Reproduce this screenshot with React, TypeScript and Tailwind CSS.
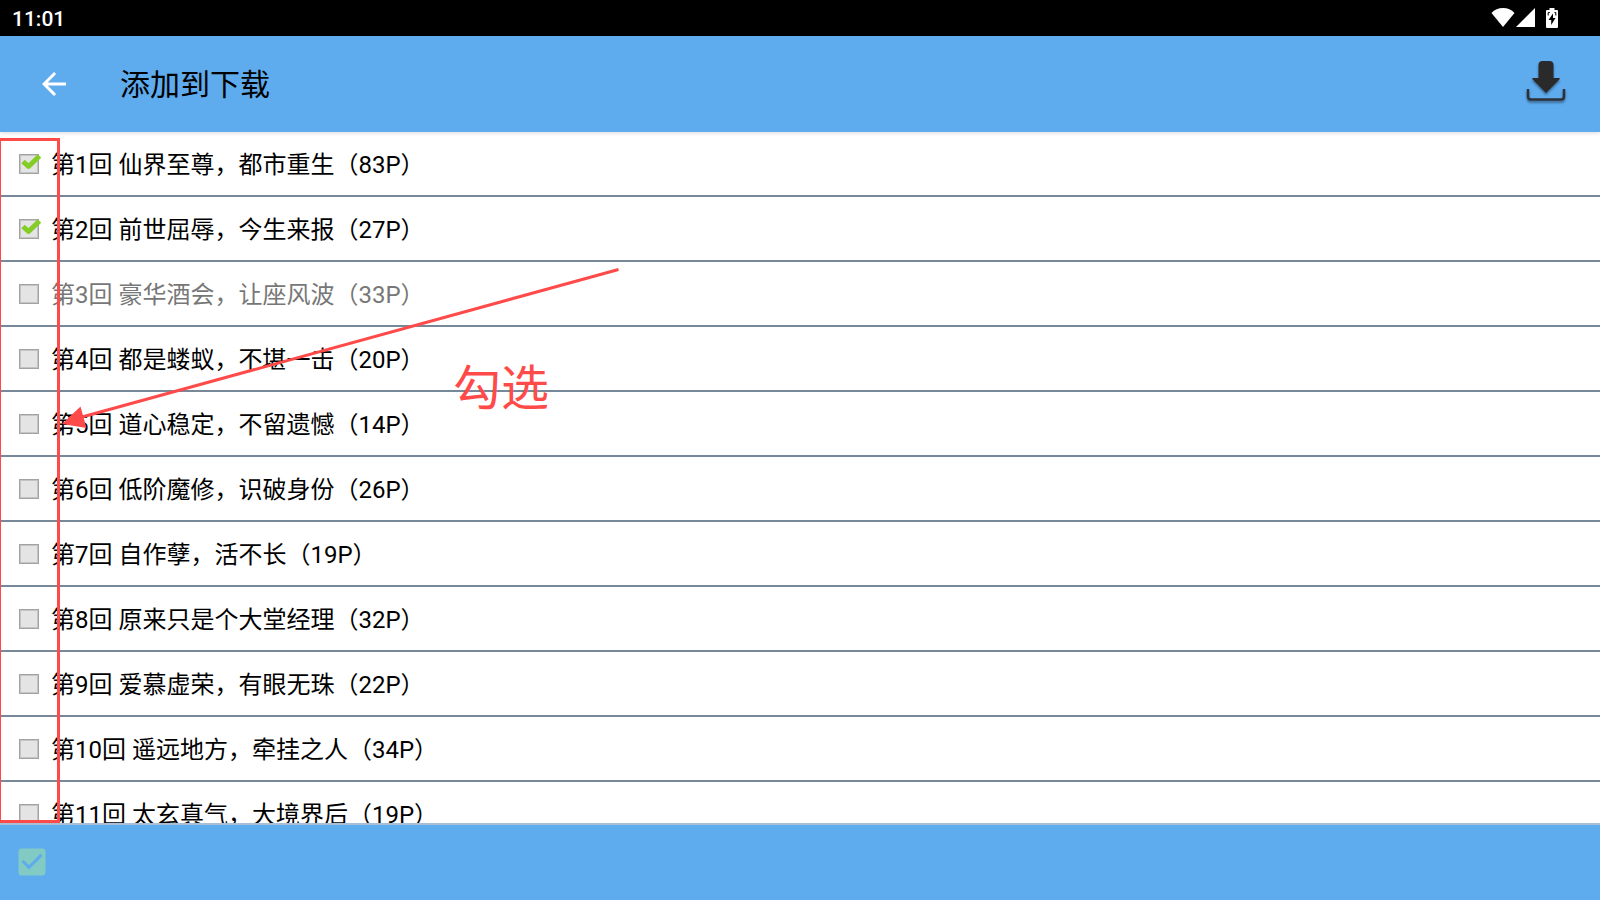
import { useState } from 'react';

type Chapter = {
  id: number;
  title: string;
  pages: number;
  downloaded?: boolean;
};

const chapters: Chapter[] = [
  { id: 1, title: '仙界至尊，都市重生', pages: 83 },
  { id: 2, title: '前世屈辱，今生来报', pages: 27 },
  { id: 3, title: '豪华酒会，让座风波', pages: 33, downloaded: true },
  { id: 4, title: '都是蝼蚁，不堪一击', pages: 20 },
  { id: 5, title: '道心稳定，不留遗憾', pages: 14 },
  { id: 6, title: '低阶魔修，识破身份', pages: 26 },
  { id: 7, title: '自作孽，活不长', pages: 19 },
  { id: 8, title: '原来只是个大堂经理', pages: 32 },
  { id: 9, title: '爱慕虚荣，有眼无珠', pages: 22 },
  { id: 10, title: '遥远地方，牵挂之人', pages: 34 },
  { id: 11, title: '太玄真气，大境界后', pages: 19 },
];

const StatusBar = () => (
  <div className="flex h-9 shrink-0 items-center justify-between bg-black pl-3 pr-[42px] text-white">
    <span className="pt-0.5 text-[21px] font-medium leading-8">11:01</span>
    <div className="flex items-center">
      <svg className="h-5 w-6" viewBox="0 0 24 20" fill="currentColor">
        <path d="M12 19 .5 5Q5 0 12 0t11.500 5z" />
      </svg>
      <svg className="ml-px h-5 w-5" viewBox="0 0 20 20" fill="currentColor">
        <path d="M0 19 19 0v19z" />
      </svg>
      <svg className="ml-[10px] h-5 w-3" viewBox="0 0 12 20">
        <path
          d="M3.500 0h5v2H11q1 0 1 1v16q0 1-1 1H1q-1 0-1-1V3q0-1 1-1h2.500z"
          fill="currentColor"
        />
        <path d="M7 5.500 2.500 12h2.700v5L9.500 10H7z" fill="#000" />
        <path d="M2.200 7.500V4.500h1.600M9.800 7.500V4.500H8.500" fill="none" stroke="#000" />
      </svg>
    </div>
  </div>
);

const Header = () => (
  <header className="z-10 flex h-24 shrink-0 items-center bg-[#5eabee] pl-9 pr-[34px] shadow-[0_1px_4px_rgba(0,0,0,0.15)]">
    <button type="button" aria-label="返回" className="text-white">
      <svg className="h-9 w-9" viewBox="0 0 24 24" fill="currentColor">
        <path d="M20 11H7.830l5.590-5.590L12 4l-8 8 8 8 1.410-1.410L7.830 13H20v-2z" />
      </svg>
    </button>
    <h1 className="ml-12 flex-1 pt-0.5 text-[30px] leading-10">添加到下载</h1>
    <button type="button" aria-label="下载" className="pb-0.5">
      <svg className="h-12 w-11 drop-shadow-[0_2px_1px_rgba(0,0,0,0.4)]" viewBox="0 0 44 48">
        <path
          d="M16.500 19V6q0-4 4-4h7q4 0 4 4v13h5.500q1.500 0 .5 1.200L24 34 10.500 20.200q-1-1.200.5-1.200z"
          fill="#2a2a2a"
        />
        <path
          d="M6 30v7.500q0 3 3 3h30q3 0 3-3V30"
          fill="none"
          stroke="#2c3238"
          strokeWidth="2.500"
        />
      </svg>
    </button>
  </header>
);

type RowProps = {
  chapter: Chapter;
  checked: boolean;
  onToggle: () => void;
};

const ChapterRow = ({ chapter, checked, onToggle }: RowProps) => (
  <li className="h-[65px] shrink-0 border-b-2 border-[#778899]">
    <label className="flex h-full items-center pl-[19px]">
      <span className="relative flex">
        <input
          type="checkbox"
          checked={checked}
          disabled={chapter.downloaded}
          onChange={onToggle}
          className="h-5 w-5 appearance-none border border-[#a3a3a3] bg-[#e4e4e4] outline-1 -outline-offset-2 outline-[#c4c4c4]"
        />
        {checked && (
          <svg
            className="pointer-events-none absolute left-0 top-0 h-5 w-6"
            viewBox="0 0 24 20"
            fill="none"
            stroke="#84cc26"
            strokeWidth="5"
          >
            <path d="M4 7.500 9.500 12.500 20.500 2" strokeLinejoin="round" />
          </svg>
        )}
      </span>
      <span
        className={
          chapter.downloaded ? 'ml-3 pt-0.5 text-2xl text-[#777]' : 'ml-3 pt-0.5 text-2xl'
        }
      >
        {`第${chapter.id}回 ${chapter.title}（${chapter.pages}P）`}
      </span>
    </label>
  </li>
);

// Red guide marks that lie over the list
const Guide = () => (
  <div className="pointer-events-none absolute inset-0 text-[#ff4a4a]">
    <div className="absolute -left-[2px] bottom-0 top-[6px] w-[62px] border-[3px] border-current" />
    <svg className="absolute left-0 top-0 h-[320px] w-[640px]" viewBox="0 0 640 320">
      <path d="M618.500 137.500 82 285" stroke="currentColor" strokeWidth="3" />
      <path d="M62 292 80.500 274.500 86.500 296z" fill="currentColor" />
    </svg>
    <span className="absolute left-[453px] top-[221px] text-5xl leading-[72px]">勾选</span>
  </div>
);

const App = () => {
  const [selected, setSelected] = useState<number[]>([1, 2]);

  const toggle = (id: number) => {
    setSelected((prev) => (prev.includes(id) ? prev.filter((x) => x !== id) : [...prev, id]));
  };

  return (
    <div
      lang="zh-CN"
      className="flex h-screen flex-col overflow-hidden bg-white font-[Roboto,'Noto_Sans_CJK_SC',sans-serif] text-black"
    >
      <StatusBar />
      <Header />
      <main className="relative min-h-0 flex-1 overflow-hidden">
        <ul className="flex flex-col">
          {chapters.map((chapter) => (
            <ChapterRow
              key={chapter.id}
              chapter={chapter}
              checked={selected.includes(chapter.id)}
              onToggle={() => toggle(chapter.id)}
            />
          ))}
        </ul>
        <Guide />
      </main>
      <footer className="flex h-[77px] shrink-0 items-center border-t-2 border-[#a9bfd8] bg-[#5eabee] pb-0.5 pl-[14px]">
        <button type="button" aria-label="全选" className="text-[#82cbc4]">
          <svg className="h-9 w-9" viewBox="0 0 24 24" fill="currentColor">
            <path d="M19 3H5c-1.110 0-2 .9-2 2v14c0 1.100.89 2 2 2h14c1.110 0 2-.9 2-2V5c0-1.100-.89-2-2-2zm-9 14l-5-5 1.410-1.410L10 14.170l7.590-7.590L19 8l-9 9z" />
          </svg>
        </button>
      </footer>
    </div>
  );
};

export default App;
